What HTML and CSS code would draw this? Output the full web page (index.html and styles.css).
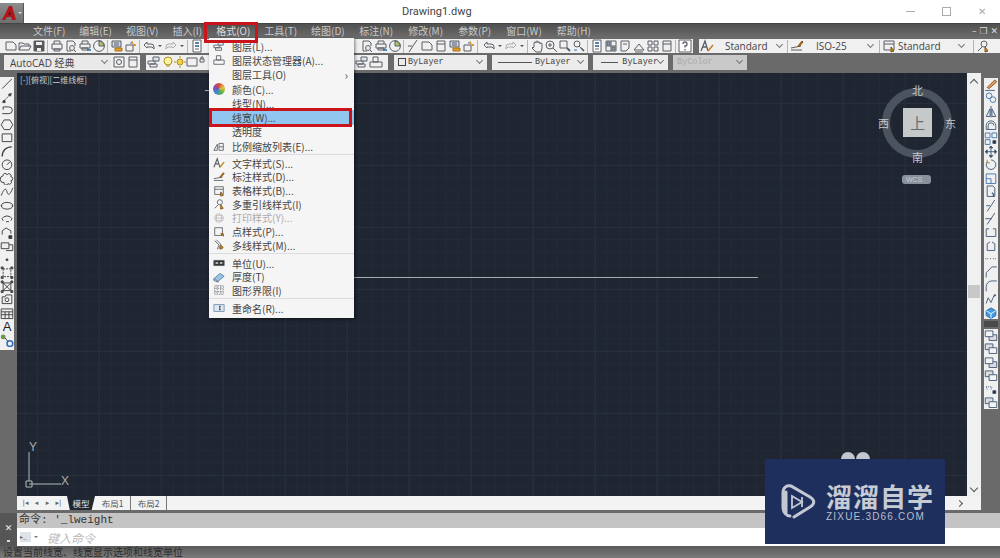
FILE: index.html
```html
<!DOCTYPE html>
<html lang="zh-CN">
  <head>
    <meta charset="UTF-8" />
    <meta name="viewport" content="width=device-width, initial-scale=1.0" />
    <title>Drawing1.dwg</title>
    <link rel="stylesheet" href="styles.css">
  </head>
  <body>
    <!-- Icon set -->
    <svg class="defs" width="0" height="0">
      <symbol id="new" viewBox="0 0 14 14"><path d="M2 3h7l3 3v5H2z"/></symbol>
      <symbol id="open" viewBox="0 0 14 14"><path d="M1 11V4h4l1 1h5v2M1 11l2-4h10l-2 4z"/></symbol>
      <symbol id="save" viewBox="0 0 14 14"><path d="M2 2h10v10H2z" fill="#555"/><path d="M4 3h6v3H4zM5 9h4v3H5z" fill="#eee" stroke="none"/></symbol>
      <symbol id="plot" viewBox="0 0 14 14"><path d="M4 5V2h6v3M2 5h10v5H2zM4 10h6v2H4z"/></symbol>
      <symbol id="preview" viewBox="0 0 14 14"><path d="M3 2h6l2 2v3M3 2v10h4"/><circle cx="8" cy="9" r="2.4"/><path d="M10 11l2 2"/></symbol>
      <symbol id="publish" viewBox="0 0 14 14"><path d="M4 5V2h6v3M2 5h10v4H2zM4 9h6v2H4z"/><path d="M9 11h4" stroke="#2a70b0" stroke-width="1.6"/></symbol>
      <symbol id="pie" viewBox="0 0 14 14"><circle cx="7" cy="7" r="5.4"/><path d="M7 7V2a5 5 0 0 1 5 5z" fill="#a9c46c"/></symbol>
      <symbol id="match" viewBox="0 0 14 14"><path d="M2 2h9v6H2z" fill="#cfd8e6"/><path d="M4 4h5M4 6h5"/><path d="M5 9h7v3H5z" fill="#e0a030" stroke="#a87010"/></symbol>
      <symbol id="sheet" viewBox="0 0 14 14"><path d="M2 6h7v6H2z"/><path d="M8 2l1 3 3 1-3 1" stroke="#d09020"/><path d="M6 4h2" stroke="#2a70b0"/></symbol>
      <symbol id="undo" viewBox="0 0 14 14"><path d="M2 6l3-3v2h4a3 3 0 0 1 3 3v2l-2-2H5v1z"/></symbol>
      <symbol id="redo" viewBox="0 0 14 14"><path d="M12 6L9 3v2H5a3 3 0 0 0-3 3v2l2-2h5v1z" stroke="#aaa"/></symbol>
      <symbol id="drop" viewBox="0 0 8 14"><path d="M2 6h4L4 8z" fill="#555" stroke="none"/></symbol>
      <symbol id="hand" viewBox="0 0 14 14"><path d="M4 8V4m0 0a1 1 0 0 1 2 0V3a1 1 0 0 1 2 0v1a1 1 0 0 1 2 0v1a1 1 0 0 1 2 0v4l-1 4H6L2 9l1-1 1 1"/></symbol>
      <symbol id="zoom" viewBox="0 0 14 14"><circle cx="6" cy="6" r="4"/><path d="M9 9l4 4M4 6h4M6 4v4"/></symbol>
      <symbol id="zoomw" viewBox="0 0 14 14"><path d="M2 2h7v7H2z"/><path d="M9 9l3 3" stroke-width="2"/></symbol>
      <symbol id="zoomp" viewBox="0 0 14 14"><circle cx="5" cy="5" r="3"/><path d="M7 7l2 2"/><path d="M9 9l3 3" stroke="#555" stroke-width="1.6"/><path d="M2 11h3" stroke="#2a70b0"/></symbol>
      <symbol id="props" viewBox="0 0 14 14"><path d="M3 1h8v12H3z" fill="#fff"/><path d="M5 4h4M5 7h4" stroke="#2a5a90" stroke-width="1.6"/><path d="M5 10h4"/></symbol>
      <symbol id="center" viewBox="0 0 14 14"><path d="M2 2h10v10H2zM7 2v10M2 7h10"/><path d="M3 3h3v3H3zM8 8h3v3H8z" fill="#8aa4c8"/></symbol>
      <symbol id="tool" viewBox="0 0 14 14"><path d="M3 2h8v7l-3 3H3z"/><path d="M5 5h4"/></symbol>
      <symbol id="sheets" viewBox="0 0 14 14"><path d="M2 11l5-6 5 6zM3 13h8"/></symbol>
      <symbol id="markup" viewBox="0 0 14 14"><path d="M2 2h4v4H2zM8 2h4v4H8zM2 8h4v4H2zM8 8h4v4H8z"/></symbol>
      <symbol id="calc" viewBox="0 0 14 14"><path d="M3 2h8v10H3zM3 5h8"/></symbol>
      <symbol id="help" viewBox="0 0 14 14"><path d="M1 1h12v12H1z" fill="#fff"/><path d="M5 5a2 2 0 1 1 2 2v1.500M7 10v1.500" stroke-width="1.300"/></symbol>
      <symbol id="textstyle" viewBox="0 0 14 14"><path d="M1 12L5 2l3 10M2.500 8h4.500" stroke-width="1.300"/><path d="M8 12l5-6" stroke="#c08020" stroke-width="1.600"/></symbol>
      <symbol id="dimstyle" viewBox="0 0 14 14"><path d="M1 11h11M1 9l10-2"/><path d="M8 7l4-5 1 1-4 5z" fill="#c08020" stroke="#805010"/></symbol>
      <symbol id="tablestyle" viewBox="0 0 14 14"><path d="M2 2h10v9H2zM2 5h10"/><path d="M9 8l3 4-3 1z" fill="#d09020" stroke="#805010"/></symbol>
      <symbol id="leader" viewBox="0 0 14 14"><path d="M2 12l4-4"/><circle cx="8" cy="5" r="3"/><path d="M9 8l3 4-3 1z" fill="#d09020" stroke="#805010"/></symbol>
      <symbol id="layer" viewBox="0 0 14 14"><path d="M1 6h7v3H1zM3 9h7v3H3z"/><path d="M6 2h6v4H6z" fill="#dde6f0"/></symbol>
      <symbol id="layer2" viewBox="0 0 14 14"><path d="M4 2h5v5H4zM1 7h12v5H1z"/></symbol>
      <symbol id="scale" viewBox="0 0 14 14"><path d="M1 12l4-7v7zM7 12V4h5v8zM7 8h5"/></symbol>
      <symbol id="plotstyle" viewBox="0 0 14 14"><circle cx="7" cy="7" r="5"/><path d="M2 7h10M4 4h6v6H4z"/></symbol>
      <symbol id="point" viewBox="0 0 14 14"><path d="M2 2h9v9H2z"/><path d="M9 9l3 3v-3z" fill="#d09020" stroke="#805010"/></symbol>
      <symbol id="mline" viewBox="0 0 14 14"><path d="M2 2l5 5-2 5M4 1l5 5-2 6"/><path d="M9 7l3 3-3 2z" fill="#d09020" stroke="#805010"/></symbol>
      <symbol id="units" viewBox="0 0 14 14"><path d="M1 4h12v6H1z" fill="#333"/><path d="M3 6h3v2H3zM8 6h3v2H8z" fill="#ddd" stroke="none"/></symbol>
      <symbol id="thick" viewBox="0 0 14 14"><path d="M1 9l7-6 5 3-7 6z" fill="#9cc4e4" stroke="#5080a8"/><path d="M1 9v2l5 2v-1"/></symbol>
      <symbol id="limits" viewBox="0 0 14 14"><path d="M2 2h10v10H2zM2 5h10M2 9h10M5 2v10M9 2v10" stroke-dasharray="1 1"/></symbol>
      <symbol id="rename" viewBox="0 0 14 14"><path d="M1 3h12v8H1z" fill="#dde8f4" stroke="#7090b0"/><path d="M7 5h2M8 5v4M7 9h2" stroke="#333"/></symbol>
      <symbol id="line" viewBox="0 0 14 14"><path d="M2 12L12 2"/></symbol>
      <symbol id="xline" viewBox="0 0 14 14"><path d="M2 12L12 2" stroke-dasharray="2 1"/><path d="M3 10h2v2H3zM9 3h2v2H9z" fill="#333"/></symbol>
      <symbol id="pline" viewBox="0 0 14 14"><path d="M3 3h6a3 3 0 0 1 0 7H2"/><path d="M3 3v3"/></symbol>
      <symbol id="polygon" viewBox="0 0 14 14"><path d="M4 2h6l3 5-3 5H4L1 7z"/></symbol>
      <symbol id="rect" viewBox="0 0 14 14"><path d="M2 3h10v8H2z"/></symbol>
      <symbol id="arc" viewBox="0 0 14 14"><path d="M2 12c0-6 4-10 10-10" stroke-width="1.400"/></symbol>
      <symbol id="circle" viewBox="0 0 14 14"><circle cx="7" cy="7" r="5"/><path d="M7 7l3-3"/></symbol>
      <symbol id="cloud" viewBox="0 0 14 14"><path d="M3 4a2 2 0 0 1 4-1 2 2 0 0 1 4 2 2 2 0 0 1 0 4 2 2 0 0 1-3 3 2 2 0 0 1-4-1 2 2 0 0 1-1-7z"/></symbol>
      <symbol id="spline" viewBox="0 0 14 14"><path d="M1 11c3-8 5-8 6-4s3 4 6-4"/></symbol>
      <symbol id="ellipse" viewBox="0 0 14 14"><ellipse cx="7" cy="7" rx="6" ry="3.500"/><path d="M1 7h1M12 7h1" stroke-width="2"/></symbol>
      <symbol id="earc" viewBox="0 0 14 14"><path d="M3 9a5 3 0 1 1 8 0"/><path d="M6 10h3"/></symbol>
      <symbol id="insert" viewBox="0 0 14 14"><path d="M2 9V5l4-3 5 3v3"/><path d="M9 10h3v3H9z" fill="#333"/></symbol>
      <symbol id="block" viewBox="0 0 14 14"><path d="M1 4h8v6H1z"/><path d="M9 6h4v6H6"/></symbol>
      <symbol id="dot" viewBox="0 0 14 14"><circle cx="7" cy="7" r="1" fill="#333"/></symbol>
      <symbol id="hatch" viewBox="0 0 14 14"><path d="M3 3h8v8H3z" stroke-dasharray="2 1"/><path d="M1 1h2v2H1zM11 1h2v2h-2zM1 11h2v2H1zM11 11h2v2h-2z" fill="#555"/></symbol>
      <symbol id="grad" viewBox="0 0 14 14"><path d="M3 3l8 8M11 3l-8 8M3 3h8v8H3z"/><path d="M1 1h2v2H1zM11 1h2v2h-2zM1 11h2v2H1zM11 11h2v2h-2z" fill="#555"/></symbol>
      <symbol id="region" viewBox="0 0 14 14"><path d="M2 4h3l1-2h6v9H2z"/><circle cx="7" cy="7" r="2"/></symbol>
      <symbol id="table" viewBox="0 0 14 14"><path d="M1 2h12v10H1zM1 5h12M1 8h12M5 5v7M9 5v7"/></symbol>
      <symbol id="addsel" viewBox="0 0 14 14"><circle cx="3" cy="3" r="2.500" fill="#6a9a50" stroke="none"/><circle cx="10" cy="10" r="3" fill="none" stroke="#2a70c0" stroke-width="1.600"/><path d="M5 4l3 4"/></symbol>
      <symbol id="erase" viewBox="0 0 14 14"><path d="M3 10l8-8 2 2-8 7z" fill="#e0a060" stroke="#905020"/><path d="M1 13h10"/></symbol>
      <symbol id="copy" viewBox="0 0 14 14"><circle cx="5" cy="5" r="3" stroke="#4a7ab0"/><circle cx="9" cy="9" r="3" stroke="#4a7ab0"/></symbol>
      <symbol id="mirror" viewBox="0 0 14 14"><path d="M7 1v12"/><path d="M6 4L2 12h4zM8 4l4 8H8z"/></symbol>
      <symbol id="offset" viewBox="0 0 14 14"><path d="M2 12V8a5 5 0 0 1 10 0v4zM4 12V8a3 3 0 0 1 6 0"/></symbol>
      <symbol id="array" viewBox="0 0 14 14"><path d="M1 1h5v5H1zM8 1h5v5H8zM1 8h5v5H1z" stroke="#4a7ab0"/><path d="M9 9h3v3H9z" fill="#222"/></symbol>
      <symbol id="move" viewBox="0 0 14 14"><path d="M7 1v12M1 7h12"/><path d="M5 3l2-2 2 2zM5 11l2 2 2-2zM3 5L1 7l2 2zM11 5l2 2-2 2z" fill="#333"/></symbol>
      <symbol id="rotate" viewBox="0 0 14 14"><path d="M7 2a5 5 0 1 1-4 2"/><path d="M3 2v3h3" stroke="#c08020"/></symbol>
      <symbol id="scale2" viewBox="0 0 14 14"><path d="M2 2h10v10H2z" stroke="#4a7ab0"/><path d="M2 7h5v5" stroke="#4a7ab0"/></symbol>
      <symbol id="stretch" viewBox="0 0 14 14"><path d="M3 1h6l2 2v9H3z"/><path d="M8 8l2 2-1 2" stroke-width="1.400"/></symbol>
      <symbol id="trim" viewBox="0 0 14 14"><path d="M3 13l8-12M2 7h4"/></symbol>
      <symbol id="extend" viewBox="0 0 14 14"><path d="M3 13l8-12M1 7h7"/></symbol>
      <symbol id="break" viewBox="0 0 14 14"><path d="M2 4v8h10V4M2 4h3M9 4h3"/></symbol>
      <symbol id="breakat" viewBox="0 0 14 14"><path d="M3 5v7h8V5M3 5l3-2M8 3l3 2"/></symbol>
      <symbol id="join" viewBox="0 0 14 14"><path d="M1 7h4M9 7h4M6 7h2" stroke-dasharray="1 1"/></symbol>
      <symbol id="chamfer" viewBox="0 0 14 14"><path d="M2 13V8l6-6h5"/></symbol>
      <symbol id="fillet" viewBox="0 0 14 14"><path d="M2 13V8a6 6 0 0 1 6-6h5"/></symbol>
      <symbol id="blend" viewBox="0 0 14 14"><path d="M2 12l2-6 3 5 3-7"/><path d="M10 4l2-1" stroke-width="2"/></symbol>
      <symbol id="explode" viewBox="0 0 14 14"><path d="M2 5l5-3 5 3v5l-5 3-5-3z" fill="#4a9ae0" stroke="#1a6ab0"/><path d="M2 5l5 3 5-3M7 8v5" stroke="#dff"/></symbol>
      <symbol id="order" viewBox="0 0 14 14"><path d="M1 2h8v6H1z" fill="#ddd"/><path d="M5 6h8v6H5z" fill="#f4f4f4"/></symbol>
      <symbol id="order2" viewBox="0 0 14 14"><path d="M5 6h8v6H5z" fill="#ddd"/><path d="M1 2h8v6H1z" fill="#f4f4f4"/></symbol>
      <symbol id="txtfront" viewBox="0 0 14 14"><path d="M2 4h6M2 4l1 3M8 4l-1 3" stroke-dasharray="1 1"/><path d="M9 8h3v3H9z" fill="#222"/></symbol>
      <symbol id="lock" viewBox="0 0 14 14"><path d="M3 4h4v3H3zM4 4V2h2v2"/></symbol>
      <symbol id="bulb" viewBox="0 0 14 14"><circle cx="7" cy="6" r="4" fill="#fff3a0" stroke="#b09020"/><path d="M5 11h4" stroke="#b09020"/></symbol>
      <symbol id="sun" viewBox="0 0 14 14"><circle cx="7" cy="7" r="3" fill="#f0d040" stroke="#b09020"/><path d="M7 1v2M7 11v2M1 7h2M11 7h2" stroke="#b09020"/></symbol>
      <symbol id="gear" viewBox="0 0 14 14"><path d="M2 2h10v10H2z"/><circle cx="7" cy="7" r="2.500"/></symbol>
    </svg>

    <div class="app">
      <!-- Barra titolo -->
      <header class="titlebar">
        <div class="app-button">
          <svg width="15" height="14" viewBox="0 0 15 14"><path d="M0 14L7 0h3l4 14h-4l-1-3H5l-2 3z" fill="#b3151c"/><path d="M6 9h3L8 5z" fill="#6e1014"/></svg>
          <span class="app-caret"></span>
        </div>
        <div class="title">Drawing1.dwg</div>
        <div class="window-buttons">
          <span class="win-min"></span>
          <span class="win-max"></span>
          <span class="win-close">✕</span>
        </div>
      </header>

      <!-- Menu -->
      <nav class="menubar">
        <span class="menu-item">文件(F)</span>
        <span class="menu-item">编辑(E)</span>
        <span class="menu-item">视图(V)</span>
        <span class="menu-item">插入(I)</span>
        <span class="menu-item menu-active">格式(O)</span>
        <span class="menu-item">工具(T)</span>
        <span class="menu-item">绘图(D)</span>
        <span class="menu-item">标注(N)</span>
        <span class="menu-item">修改(M)</span>
        <span class="menu-item">参数(P)</span>
        <span class="menu-item">窗口(W)</span>
        <span class="menu-item">帮助(H)</span>
        <div class="doc-buttons"><span>–</span><span>❐</span><span>✕</span></div>
      </nav>

      <!-- Toolbar standard -->
      <div class="toolbar toolbar-top">
        <div class="tb-left">
          <svg class="ic"><use href="#new"/></svg>
          <svg class="ic"><use href="#open"/></svg>
          <svg class="ic"><use href="#save"/></svg>
          <i class="sep"></i>
          <svg class="ic"><use href="#plot"/></svg>
          <svg class="ic"><use href="#preview"/></svg>
          <svg class="ic"><use href="#publish"/></svg>
          <svg class="ic"><use href="#pie"/></svg>
          <i class="sep"></i>
          <svg class="ic"><use href="#match"/></svg>
          <svg class="ic"><use href="#sheet"/></svg>
          <i class="sep"></i>
          <svg class="ic"><use href="#undo"/></svg>
          <svg class="ic-small"><use href="#drop"/></svg>
          <svg class="ic"><use href="#redo"/></svg>
          <svg class="ic-small"><use href="#drop"/></svg>
          <i class="sep"></i>
          <svg class="ic"><use href="#props"/></svg>
        </div>
        <div class="tb-right">
          <svg class="ic"><use href="#preview"/></svg>
          <svg class="ic"><use href="#publish"/></svg>
          <svg class="ic"><use href="#pie"/></svg>
          <i class="sep"></i>
          <svg class="ic"><use href="#trim"/></svg>
          <svg class="ic"><use href="#new"/></svg>
          <svg class="ic"><use href="#calc"/></svg>
          <svg class="ic"><use href="#match"/></svg>
          <svg class="ic"><use href="#sheet"/></svg>
          <i class="sep sep-wide"></i>
          <svg class="ic"><use href="#undo"/></svg>
          <svg class="ic-small"><use href="#drop"/></svg>
          <svg class="ic"><use href="#redo"/></svg>
          <svg class="ic-small"><use href="#drop"/></svg>
          <i class="sep"></i>
          <svg class="ic"><use href="#hand"/></svg>
          <svg class="ic"><use href="#zoom"/></svg>
          <svg class="ic"><use href="#zoomw"/></svg>
          <svg class="ic"><use href="#zoomp"/></svg>
          <i class="sep"></i>
          <svg class="ic"><use href="#props"/></svg>
          <svg class="ic"><use href="#center"/></svg>
          <svg class="ic"><use href="#tool"/></svg>
          <svg class="ic"><use href="#sheets"/></svg>
          <svg class="ic"><use href="#markup"/></svg>
          <svg class="ic"><use href="#calc"/></svg>
          <i class="sep"></i>
          <svg class="ic"><use href="#help"/></svg>
        </div>
        <div class="tb-styles">
          <svg class="ic"><use href="#textstyle"/></svg>
          <div class="style-combo combo-text">Standard<span class="caret"></span></div>
          <i class="sep"></i>
          <svg class="ic"><use href="#dimstyle"/></svg>
          <div class="style-combo combo-dim">ISO-25<span class="caret"></span></div>
          <i class="sep"></i>
          <svg class="ic"><use href="#tablestyle"/></svg>
          <div class="style-combo combo-table">Standard<span class="caret"></span></div>
          <i class="sep"></i>
          <svg class="ic"><use href="#leader"/></svg>
        </div>
      </div>

      <!-- Toolbar layer -->
      <div class="toolbar toolbar-bottom">
        <div class="tb-workspace">
          <div class="style-combo combo-workspace">AutoCAD 经典<span class="caret"></span></div>
          <svg class="ic"><use href="#gear"/></svg>
          <svg class="ic"><use href="#calc"/></svg>
        </div>
        <div class="tb-layer">
          <svg class="ic"><use href="#layer"/></svg>
          <svg class="ic"><use href="#bulb"/></svg>
          <svg class="ic ic-tight"><use href="#sun"/></svg>
          <svg class="ic ic-tight"><use href="#rect"/></svg>
          <svg class="ic ic-tight"><use href="#lock"/></svg>
          <svg class="ic ic-tight"><use href="#rect"/></svg>
        </div>
        <div class="tb-layer-right">
          <svg class="ic"><use href="#layer"/></svg>
          <svg class="ic"><use href="#layer2"/></svg>
        </div>
        <div class="prop-combo prop-color"><span class="swatch"></span>ByLayer<span class="caret"></span></div>
        <div class="prop-combo prop-type"><span class="stroke"></span>ByLayer<span class="caret"></span></div>
        <div class="prop-combo prop-weight"><span class="stroke stroke-short"></span>ByLayer<span class="caret"></span></div>
        <div class="prop-combo prop-plot">ByColor<span class="caret"></span></div>
      </div>

      <div class="workspace">
        <aside class="left-tools">
          <svg class="ic"><use href="#line"/></svg>
          <svg class="ic"><use href="#xline"/></svg>
          <svg class="ic"><use href="#pline"/></svg>
          <svg class="ic"><use href="#polygon"/></svg>
          <svg class="ic"><use href="#rect"/></svg>
          <svg class="ic"><use href="#arc"/></svg>
          <svg class="ic"><use href="#circle"/></svg>
          <svg class="ic"><use href="#cloud"/></svg>
          <svg class="ic"><use href="#spline"/></svg>
          <svg class="ic"><use href="#ellipse"/></svg>
          <svg class="ic"><use href="#earc"/></svg>
          <svg class="ic"><use href="#insert"/></svg>
          <svg class="ic"><use href="#block"/></svg>
          <svg class="ic"><use href="#dot"/></svg>
          <svg class="ic"><use href="#hatch"/></svg>
          <svg class="ic"><use href="#grad"/></svg>
          <svg class="ic"><use href="#region"/></svg>
          <svg class="ic"><use href="#table"/></svg>
          <span class="tool-letter">A</span>
          <svg class="ic"><use href="#addsel"/></svg>
        </aside>

        <main class="drawing">
          <div class="drawing-row">
            <div class="canvas">
              <div class="view-label">[-][俯视][二维线框]</div>
              <div class="tick"></div>
              <div class="drawn-line"></div>

              <div class="viewcube">
                <div class="cube-ring"></div>
                <div class="cube-face">上</div>
                <span class="cube-n">北</span>
                <span class="cube-s">南</span>
                <span class="cube-w">西</span>
                <span class="cube-e">东</span>
                <div class="cube-wcs">WCS</div>
              </div>

              <svg class="ucs" width="50" height="54" viewBox="0 0 50 54">
                <path d="M4 42V13M4 45h32M1 42h6v6H1z" fill="none" stroke="#b4b8bc"/>
                <text x="4" y="12" class="ucs-text">Y</text>
                <text x="36" y="46" class="ucs-text">X</text>
              </svg>
            </div>
            <div class="vscroll">
              <span class="arrow-up"></span>
              <span class="vthumb"></span>
              <span class="arrow-down"></span>
            </div>
          </div>
          <div class="tabs">
            <div class="tab-nav"><span>|◂</span><span>◂</span><span>▸</span><span>▸|</span></div>
            <span class="tab tab-active">模型</span>
            <span class="tab">布局1</span>
            <span class="tab">布局2</span>
            <span class="hscroll-arrow"></span>
          </div>
        </main>

        <aside class="right-tools">
          <div class="right-group">
            <svg class="ic"><use href="#erase"/></svg>
            <svg class="ic"><use href="#copy"/></svg>
            <svg class="ic"><use href="#mirror"/></svg>
            <svg class="ic"><use href="#offset"/></svg>
            <svg class="ic"><use href="#array"/></svg>
            <svg class="ic"><use href="#move"/></svg>
            <svg class="ic"><use href="#rotate"/></svg>
            <svg class="ic"><use href="#scale2"/></svg>
            <svg class="ic"><use href="#stretch"/></svg>
            <svg class="ic"><use href="#trim"/></svg>
            <svg class="ic"><use href="#extend"/></svg>
            <svg class="ic"><use href="#break"/></svg>
            <svg class="ic"><use href="#breakat"/></svg>
            <svg class="ic"><use href="#join"/></svg>
            <svg class="ic"><use href="#chamfer"/></svg>
            <svg class="ic"><use href="#fillet"/></svg>
            <svg class="ic"><use href="#blend"/></svg>
            <svg class="ic"><use href="#explode"/></svg>
          </div>
          <div class="right-handle"></div>
          <div class="right-group">
            <svg class="ic"><use href="#order2"/></svg>
            <svg class="ic"><use href="#order"/></svg>
            <svg class="ic"><use href="#order2"/></svg>
            <svg class="ic"><use href="#order"/></svg>
            <svg class="ic"><use href="#txtfront"/></svg>
            <svg class="ic"><use href="#order"/></svg>
          </div>
        </aside>
      </div>

      <!-- Riga di comando -->
      <section class="command">
        <div class="command-side">
          <span class="command-close">✕</span>
          <span class="command-grip"></span>
        </div>
        <div class="command-main">
          <div class="command-history">命令: '_lweight</div>
          <div class="command-input">
            <span class="prompt-icon">▸_</span><span class="prompt-caret"></span>
            <span class="prompt-text">键入命令</span>
          </div>
        </div>
      </section>

      <footer class="statusbar">设置当前线宽、线宽显示选项和线宽单位</footer>

      <!-- Menu a tendina Formato -->
      <div class="dropdown">
        <div class="dd-group dd-first">
          <div class="dd-row"><svg class="ic"><use href="#layer"/></svg>图层(L)...</div>
          <div class="dd-row"><svg class="ic"><use href="#layer2"/></svg>图层状态管理器(A)...</div>
          <div class="dd-row"><span class="ic"></span>图层工具(O)<span class="dd-more">›</span></div>
          <div class="dd-row"><span class="ic color-wheel"></span>颜色(C)...</div>
          <div class="dd-row"><span class="ic"></span>线型(N)...</div>
          <div class="dd-row dd-highlight"><span class="ic"></span>线宽(W)...</div>
          <div class="dd-row"><span class="ic"></span>透明度</div>
          <div class="dd-row"><svg class="ic"><use href="#scale"/></svg>比例缩放列表(E)...</div>
        </div>
        <div class="dd-group">
          <div class="dd-row"><svg class="ic"><use href="#textstyle"/></svg>文字样式(S)...</div>
          <div class="dd-row"><svg class="ic"><use href="#dimstyle"/></svg>标注样式(D)...</div>
          <div class="dd-row"><svg class="ic"><use href="#tablestyle"/></svg>表格样式(B)...</div>
          <div class="dd-row"><svg class="ic"><use href="#leader"/></svg>多重引线样式(I)</div>
          <div class="dd-row dd-disabled"><svg class="ic"><use href="#plotstyle"/></svg>打印样式(Y)...</div>
          <div class="dd-row"><svg class="ic"><use href="#point"/></svg>点样式(P)...</div>
          <div class="dd-row"><svg class="ic"><use href="#mline"/></svg>多线样式(M)...</div>
        </div>
        <div class="dd-group">
          <div class="dd-row"><svg class="ic"><use href="#units"/></svg>单位(U)...</div>
          <div class="dd-row"><svg class="ic"><use href="#thick"/></svg>厚度(T)</div>
          <div class="dd-row"><svg class="ic"><use href="#limits"/></svg>图形界限(I)</div>
        </div>
        <div class="dd-group dd-last">
          <div class="dd-row"><svg class="ic"><use href="#rename"/></svg>重命名(R)...</div>
        </div>
      </div>

      <!-- Watermark -->
      <div class="blobs"><span></span><span></span></div>
      <div class="watermark">
        <svg class="wm-logo" width="36" height="38" viewBox="0 0 36 38">
          <path d="M6 31V9M10 33c-3 0-7-3-7-9V10c0-6 4-8 8-7l19 11c5 3 5 7 0 10L14 34" fill="none" stroke="#c3c8d2" stroke-width="3" stroke-linecap="round"/>
          <path d="M12 13l10 6-10 6z" fill="none" stroke="#c3c8d2" stroke-width="1.800"/>
          <path d="M22 14v10" stroke="#c3c8d2" stroke-width="1.800"/>
        </svg>
        <div class="wm-text">
          <div class="wm-title">溜溜自学</div>
          <div class="wm-url">ZIXUE.3D66.COM</div>
        </div>
      </div>
    </div>
  </body>
</html>
```

FILE: styles.css
```css
html,
body {
  margin: 0;
  padding: 0;
  width: 100%;
  height: 100%;
  overflow: hidden;
}

body {
  font-family: "Noto Sans CJK SC", "Noto Sans", sans-serif;
  font-size: 10px;
  color: #333;
}

.defs {
  position: absolute;
}

.app {
  position: relative;
  display: flex;
  flex-direction: column;
  width: 1000px;
  height: 558px;
  overflow: hidden;
  background-color: #6a6a6a;
}

/* Icone */
.ic {
  display: block;
  flex: none;
  width: 14px;
  height: 14px;
  fill: none;
  stroke: #5a5f66;
  stroke-width: 1;
}

.ic-small {
  display: block;
  flex: none;
  width: 8px;
  height: 14px;
  fill: none;
  stroke: #555;
}

.ic-tight {
  margin-left: -2px;
}

.sep {
  flex: none;
  width: 4px;
  height: 13px;
  box-sizing: border-box;
  border-left: 1px solid #b5b5b5;
  margin-left: 1px;
  margin-right: -1px;
}

.sep-wide {
  width: 6px;
}

/* Barra titolo */
.titlebar {
  display: flex;
  align-items: center;
  flex: none;
  height: 23px;
  background-color: #fff;
}

.app-button {
  display: flex;
  align-items: center;
  align-self: flex-end;
  gap: 1px;
  width: 24px;
  height: 20px;
  box-sizing: border-box;
  padding-left: 2px;
  background: linear-gradient(#8d8d8d, #6f6f6f);
  border-right: 1px solid #555;
}

.app-caret {
  border-left: 2px solid transparent;
  border-right: 2px solid transparent;
  border-top: 2px solid #ddd;
}

.title {
  margin-left: 378px;
  font-family: Roboto, sans-serif;
  font-size: 11px;
  color: #444;
}

.window-buttons {
  display: flex;
  align-items: center;
  margin-left: auto;
  margin-right: 10px;
  gap: 27px;
  color: #aaa;
}

.win-min {
  width: 9px;
  border-top: 1px solid #aaa;
}

.win-max {
  width: 7px;
  height: 7px;
  border: 1px solid #aaa;
}

.win-close {
  font-family: "DejaVu Sans", sans-serif;
  font-size: 10px;
  line-height: 10px;
  width: 12px;
}

/* Menu */
.menubar {
  display: flex;
  align-items: center;
  flex: none;
  height: 15px;
  padding-left: 26px;
  background: linear-gradient(#505050, #6c6c6c);
  border-top: 1px solid #444;
  box-sizing: border-box;
}

.menu-item {
  position: relative;
  padding: 0 7px;
  color: #c9c9c9;
  line-height: 14px;
  white-space: nowrap;
}

.menu-item:nth-child(n+8) {
  padding: 0 7.5px;
}

.menu-active {
  color: #ddd;
}

.menu-active::after {
  content: "";
  position: absolute;
  z-index: 5;
  left: -5px;
  right: -1px;
  top: -2px;
  height: 21px;
  box-sizing: border-box;
  border: 3px solid #c9141c;
}

.doc-buttons {
  display: flex;
  gap: 3px;
  margin-left: auto;
  margin-right: 2px;
  color: #ddd;
  font-family: "DejaVu Sans", sans-serif;
  font-size: 9px;
}

/* Toolbar */
.toolbar {
  display: flex;
  flex: none;
  height: 16px;
  align-items: center;
}

.toolbar-top {
  background-color: #6a6a6a;
}

.tb-left,
.tb-right,
.tb-styles {
  display: flex;
  align-items: center;
  height: 14px;
  background-color: #f0f0f0;
}

.tb-left {
  width: 356px;
  padding-left: 4px;
  box-sizing: border-box;
}

.tb-right {
  width: 337px;
  padding-left: 4px;
  box-sizing: border-box;
}

.tb-styles {
  flex: 1;
  margin-left: 6px;
  padding-left: 1px;
}

.style-combo {
  display: flex;
  align-items: center;
  justify-content: space-between;
  box-sizing: border-box;
  height: 14px;
  font-family: "Open Sans", "Noto Sans CJK SC", sans-serif;
  font-size: 10px;
  color: #444;
  background-color: #f0f0f0;
}

.caret {
  flex: none;
  width: 4px;
  height: 4px;
  margin-top: -3px;
  border-right: 1px solid #777;
  border-bottom: 1px solid #777;
  transform: rotate(45deg);
}

.combo-text {
  width: 72px;
  padding: 0 4px 0 11px;
}

.combo-dim {
  width: 74px;
  padding: 0 5px 0 12px;
}

.combo-table {
  width: 76px;
  padding: 0 8px 0 2px;
}

.tb-workspace {
  display: flex;
  align-items: center;
  height: 15px;
  margin-left: 4px;
  background-color: #f0f0f0;
  width: 136px;
}

.combo-workspace {
  width: 108px;
  padding: 0 4px 0 6px;
  margin-right: 1px;
  background-color: #e9e9e9;
}

.tb-layer {
  display: flex;
  align-items: center;
  height: 15px;
  width: 206px;
  margin-left: 6px;
  padding-left: 1px;
  box-sizing: border-box;
  background-color: #f0f0f0;
}

.tb-layer-right {
  display: flex;
  align-items: center;
  height: 15px;
  width: 36px;
  padding-left: 3px;
  box-sizing: border-box;
  background-color: #f0f0f0;
}

.prop-combo {
  display: flex;
  align-items: center;
  box-sizing: border-box;
  height: 15px;
  margin-left: 6px;
  padding: 0 5px 0 4px;
  font-family: "Liberation Mono", monospace;
  font-size: 8.5px;
  color: #444;
  background-color: #ececec;
}

.prop-combo .caret {
  margin-left: auto;
}

.prop-color {
  width: 93px;
  margin-left: 6px;
}

.prop-type {
  width: 96px;
  margin-left: 5px;
}

.prop-weight {
  width: 75px;
  margin-left: 5px;
}

.prop-plot {
  width: 74px;
  margin-left: 5px;
  color: #aaa;
  background-color: #c9c9c9;
}

.swatch {
  width: 6px;
  height: 6px;
  margin-right: 2px;
  border: 1px solid #444;
}

.stroke {
  width: 34px;
  margin-left: 2px;
  margin-right: 3px;
  border-top: 1px solid #555;
}

.stroke-short {
  width: 20px;
  margin-left: 4px;
  margin-right: 4px;
}

/* Area di lavoro */
.workspace {
  display: flex;
  flex: none;
  height: 437px;
  margin-top: 3px;
}

.left-tools {
  display: flex;
  flex-direction: column;
  align-items: center;
  flex: none;
  align-self: flex-start;
  width: 14px;
  height: 273px;
  margin-top: 4px;
  margin-right: 3px;
  gap: 0;
  background-color: #f0f0f0;
}

.left-tools .ic {
  height: 13.5px;
  stroke: #444;
}

.tool-letter {
  font-family: "Liberation Sans", sans-serif;
  font-size: 13px;
  line-height: 13.5px;
  color: #222;
}

.drawing {
  display: flex;
  flex-direction: column;
  flex: none;
  width: 964px;
}

.drawing-row {
  display: flex;
  flex: none;
  height: 423px;
}

/* Griglia del disegno */
.canvas {
  position: relative;
  flex: none;
  width: 950px;
  background-color: #1f2631;
  background-image:
    linear-gradient(#272f3b 1px, transparent 1px),
    linear-gradient(90deg, #272f3b 1px, transparent 1px),
    linear-gradient(#222a35 1px, transparent 1px),
    linear-gradient(90deg, #222a35 1px, transparent 1px);
  background-size: 62px 62px, 62px 62px, 12.4px 12.4px, 12.4px 12.4px;
  background-position: 0 30px, 20px 0, 0 5px, 7px 0;
}

.view-label {
  position: absolute;
  left: 3px;
  top: 1px;
  font-size: 8px;
  color: #c8ccd0;
  white-space: nowrap;
}

.tick {
  position: absolute;
  left: 188px;
  top: 17px;
  width: 5px;
  border-top: 1px solid #aaa;
}

.drawn-line {
  position: absolute;
  left: 337px;
  top: 204px;
  width: 404px;
  border-top: 1px solid #a6a8aa;
}

/* ViewCube */
.viewcube {
  position: absolute;
  left: 850px;
  top: 5px;
  width: 100px;
  height: 110px;
  color: #c5c8cc;
  font-size: 11px;
}

.cube-ring {
  position: absolute;
  left: 15px;
  top: 10px;
  width: 70px;
  height: 70px;
  box-sizing: border-box;
  border: 8px solid #4b535f;
  border-radius: 50%;
}

.cube-face {
  position: absolute;
  left: 36px;
  top: 30px;
  width: 29px;
  height: 29px;
  line-height: 29px;
  text-align: center;
  font-size: 15px;
  color: #686c70;
  background-color: #c6c9c9;
}

.cube-n,
.cube-s,
.cube-w,
.cube-e {
  position: absolute;
  line-height: 12px;
}

.cube-n { left: 45px; top: 6px; }
.cube-s { left: 45px; top: 73px; }
.cube-w { left: 11px; top: 39px; }
.cube-e { left: 78px; top: 39px; }

.cube-wcs {
  position: absolute;
  left: 35px;
  top: 97px;
  width: 29px;
  height: 9px;
  padding-left: 4px;
  box-sizing: border-box;
  border-radius: 3px;
  background-color: #8a919c;
  font-family: "Liberation Sans", sans-serif;
  font-size: 7px;
  line-height: 9px;
  color: #c8ccd2;
}

.ucs {
  position: absolute;
  left: 8px;
  top: 366px;
}

.ucs-text {
  font-family: "Liberation Sans", sans-serif;
  font-size: 12px;
  fill: #a8acb0;
}

/* Scrollbar */
.vscroll {
  display: flex;
  flex-direction: column;
  align-items: center;
  flex: none;
  width: 14px;
  background-color: #f0f0f0;
}

.arrow-up,
.arrow-down {
  width: 5px;
  height: 5px;
  border-left: 1px solid #555;
  border-top: 1px solid #555;
  transform: rotate(45deg);
}

.arrow-up {
  margin-top: 7px;
}

.arrow-down {
  margin-top: auto;
  margin-bottom: 5px;
  transform: rotate(225deg);
}

.vthumb {
  width: 12px;
  height: 13px;
  margin-top: 199px;
  background-color: #c8c8c8;
}

/* Linguette */
.tabs {
  display: flex;
  align-items: center;
  flex: none;
  height: 14px;
  background-color: #f3f3f3;
  font-size: 8.5px;
  color: #555;
}

.tab-nav {
  display: flex;
  width: 45px;
  margin-left: 4px;
  gap: 2px;
  font-family: "DejaVu Sans", sans-serif;
  font-size: 7px;
  color: #666;
}

.tab-nav span {
  width: 9px;
  text-align: center;
}

.tab {
  display: block;
  width: 36px;
  text-align: center;
  line-height: 14px;
  border-right: 1px solid #777;
  box-sizing: border-box;
}

.tab-active {
  margin-left: 1px;
  width: 28px;
  background-color: #1f2732;
  color: #e4e4e4;
  clip-path: polygon(0 0, 100% 0, 88% 100%, 10% 100%);
  border-right: 0;
}

.hscroll-arrow {
  width: 4px;
  height: 4px;
  margin-left: auto;
  margin-right: 19px;
  border-right: 1px solid #555;
  border-top: 1px solid #555;
  transform: rotate(45deg);
}

/* Pannello destro */
.right-tools {
  display: flex;
  flex-direction: column;
  align-items: center;
  flex: none;
  width: 19px;
  padding-top: 5px;
  padding-left: 1px;
  box-sizing: border-box;
}

.right-group {
  display: flex;
  flex-direction: column;
  width: 14px;
  background-color: #f0f0f0;
}

.right-group .ic {
  height: 13.4px;
  stroke: #47607e;
}

.right-handle {
  width: 14px;
  height: 6px;
  margin: 2px 0;
  background-color: #4a4a4a;
}

/* Riga di comando */
.command {
  display: flex;
  flex: none;
  height: 33px;
  margin-top: 3px;
}

.command-side {
  display: flex;
  flex-direction: column;
  align-items: center;
  flex: none;
  width: 17px;
  box-sizing: border-box;
  padding-top: 9px;
  background-color: #565656;
  color: #eee;
}

.command-close {
  font-family: "DejaVu Sans", sans-serif;
  font-weight: bold;
  font-size: 9px;
  line-height: 12px;
}

.command-grip {
  width: 3px;
  height: 2px;
  margin-top: 6px;
  background-color: #ddd;
}

.command-main {
  display: flex;
  flex-direction: column;
  flex: 1;
}

.command-history {
  flex: none;
  height: 15px;
  padding-left: 2px;
  background-color: #c4c4c4;
  font-family: "Liberation Mono", "Noto Sans CJK SC", monospace;
  font-size: 11px;
  line-height: 15px;
  color: #333;
}

.command-input {
  display: flex;
  align-items: center;
  flex: 1;
  background-color: #fff;
}

.prompt-icon {
  width: 11px;
  height: 10px;
  margin-left: 3px;
  background-color: #dfe3e8;
  font-size: 6px;
  line-height: 10px;
  color: #666;
}

.prompt-caret {
  margin-left: 3px;
  border-left: 2px solid transparent;
  border-right: 2px solid transparent;
  border-top: 2px solid #777;
}

.prompt-text {
  margin-left: 9px;
  font-size: 12px;
  font-style: italic;
  color: #bbb;
}

.statusbar {
  flex: 1;
  padding-left: 3px;
  background: linear-gradient(#5a5a5a, #7c7c7c);
  font-size: 10px;
  line-height: 12px;
  color: #2c2c2c;
  white-space: nowrap;
}

/* Menu a tendina */
.dropdown {
  position: absolute;
  z-index: 4;
  left: 209px;
  top: 38px;
  width: 145px;
  height: 280px;
  box-sizing: border-box;
  background-color: #f5f5f5;
  box-shadow: 1px 1px 3px rgba(0, 0, 0, 0.5);
}

.dd-group {
  padding: 1px 0;
  border-bottom: 1px solid #dcdcdc;
  margin-bottom: 1px;
}

.dd-first {
  margin-bottom: 0;
}

.dd-last {
  margin-top: 1px;
  border-bottom: 0;
}

.dd-row {
  display: flex;
  align-items: center;
  height: 13.7px;
  padding-left: 3px;
  line-height: 13px;
  color: #444;
  white-space: nowrap;
}

.dd-first .dd-row {
  height: 14.3px;
}

.dd-row .ic {
  margin-right: 6px;
  height: 12px;
  width: 14px;
}

.dd-more {
  margin-left: auto;
  margin-right: 6px;
  font-size: 12px;
  color: #666;
}

.dd-disabled {
  color: #aaa;
}

.dd-disabled .ic {
  stroke: #bbb;
}

.color-wheel {
  width: 12px !important;
  margin-left: 1px;
  margin-right: 7px !important;
  border-radius: 50%;
  background: conic-gradient(#d94a3a, #e8c040, #5ab04a, #3a8ad0, #7a50b0, #d94a3a);
}

.dd-highlight {
  position: relative;
  background-color: #90c6f0;
}

.dd-highlight::after {
  content: "";
  position: absolute;
  left: 0;
  right: 2px;
  top: -2px;
  bottom: -2px;
  border: 3px solid #c9141c;
}

/* Watermark */
.blobs {
  position: absolute;
  left: 841px;
  top: 452px;
  display: flex;
  gap: 1px;
}

.blobs span {
  width: 14px;
  height: 14px;
  border-radius: 50%;
  background-color: #c3c6cc;
}

.watermark {
  position: absolute;
  left: 765px;
  top: 459px;
  display: flex;
  align-items: center;
  gap: 10px;
  width: 180px;
  height: 85px;
  box-sizing: border-box;
  padding-left: 15px;
  background-color: #1e2f5e;
}

.wm-title {
  font-size: 26px;
  line-height: 31px;
  font-weight: 700;
  letter-spacing: 1px;
  color: #c6cbd4;
  white-space: nowrap;
}

.wm-url {
  font-family: "Liberation Sans", sans-serif;
  font-size: 10px;
  line-height: 12px;
  letter-spacing: 1.2px;
  color: #b8bec9;
  white-space: nowrap;
}
```
